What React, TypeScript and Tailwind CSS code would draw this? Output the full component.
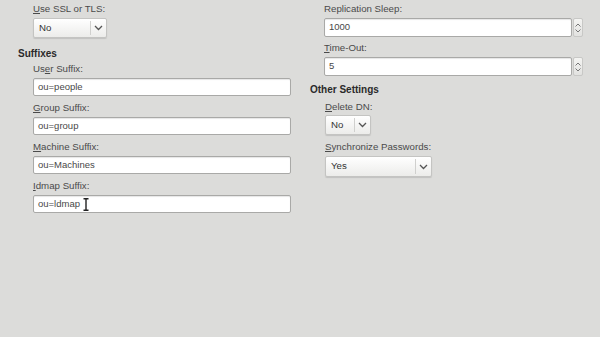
import React from "react";

const font = { fontFamily: '"Liberation Sans", Arial, sans-serif' };

function Label({ pre = "", u, post }: { pre?: string; u: string; post: string }) {
  return (
    <div className="h-[12px] leading-[12px] text-[9.7px] text-[#4a4a4a] whitespace-nowrap">
      {pre}
      <span className="underline underline-offset-1">{u}</span>
      {post}
    </div>
  );
}

function Chevron() {
  return (
    <svg width="9" height="6" viewBox="0 0 9 6" className="block">
      <path d="M1 1 L4.5 4.5 L8 1" fill="none" stroke="#555" strokeWidth="1.3" />
    </svg>
  );
}

function Select({ value, w, h, divider }: { value: string; w: string; h: string; divider: string }) {
  return (
    <div
      className={`${w} ${h} flex items-stretch rounded-[2px] border border-[#c4c4c2] bg-gradient-to-b from-[#ffffff] to-[#ececea] shadow-[0_1px_1px_rgba(0,0,0,0.12)]`}
    >
      <div className={`${divider} flex items-center pl-[5px] text-[9.7px] text-[#333]`}>{value}</div>
      <div className="w-px my-[2px] bg-[#d0d0ce]" />
      <div className="flex-1 flex items-center justify-center">
        <Chevron />
      </div>
    </div>
  );
}

function TextInput({ value, h = "h-[18px]", children }: { value: string; h?: string; children?: React.ReactNode }) {
  return (
    <div
      className={`w-[258px] ${h} flex items-center rounded-[2px] border border-[#a9a9a7] bg-white pl-[4px] text-[9.5px] text-[#484848] shadow-[inset_0_1px_1px_rgba(0,0,0,0.1)]`}
    >
      {value}
      {children}
    </div>
  );
}

function SpinInput({ value }: { value: string }) {
  return (
    <div className="flex h-[19px] items-stretch">
      <div className="w-[248px] flex items-center rounded-[2px] border border-[#a9a9a7] bg-white pl-[4px] text-[9.5px] text-[#484848] shadow-[inset_0_1px_1px_rgba(0,0,0,0.1)]">
        {value}
      </div>
      <div className="ml-[1px] w-[10px] flex flex-col items-center justify-center gap-[2px] rounded-[2px] border border-[#c8c8c6] bg-gradient-to-b from-[#f4f4f2] to-[#e2e2e0]">
        <svg width="6" height="4" viewBox="0 0 6 4"><path d="M0.5 3.5 L3 1 L5.5 3.5" fill="none" stroke="#777" strokeWidth="1" /></svg>
        <svg width="6" height="4" viewBox="0 0 6 4"><path d="M0.5 0.5 L3 3 L5.5 0.5" fill="none" stroke="#777" strokeWidth="1" /></svg>
      </div>
    </div>
  );
}

export default function App() {
  return (
    <div className="w-[600px] h-[337px] bg-[#dcdcda] flex overflow-hidden" style={font}>
      {/* left column */}
      <div className="w-[292px] pl-[18px] pt-[3px] flex flex-col">
        <div className="pl-[15px] flex flex-col">
          <Label u="U" post="se SSL or TLS:" />
          <div className="mt-[3px]">
            <Select value="No" w="w-[74px]" h="h-[20px]" divider="w-[56px]" />
          </div>
        </div>
        <div className="mt-[10px] h-[12px] leading-[12px] text-[10px] font-bold text-[#2a2a2a]">Suffixes</div>
        <div className="pl-[15px] flex flex-col mt-[3px]">
          <Label pre="Us" u="e" post="r Suffix:" />
          <div className="mt-[3px]"><TextInput value="ou=people" /></div>
          <div className="mt-[6px]"><Label u="G" post="roup Suffix:" /></div>
          <div className="mt-[3px]"><TextInput value="ou=group" /></div>
          <div className="mt-[6px]"><Label u="M" post="achine Suffix:" /></div>
          <div className="mt-[3px]"><TextInput value="ou=Machines" /></div>
          <div className="mt-[6px]"><Label u="I" post="dmap Suffix:" /></div>
          <div className="mt-[3px]">
            <TextInput value="ou=ldmap">
              <svg width="6" height="13" viewBox="0 0 6 13" className="ml-[3px]">
                <path d="M0.5 0.8 H5.5 M0.5 12.2 H5.5 M3 0.8 V12.2" stroke="#222" strokeWidth="1.4" fill="none" />
              </svg>
            </TextInput>
          </div>
        </div>
      </div>
      {/* right column */}
      <div className="pl-[18px] pt-[3px] flex flex-col">
        <div className="pl-[14px] flex flex-col">
          <div className="h-[12px] leading-[12px] text-[9.7px] text-[#4a4a4a]">Replication Sleep:</div>
          <div className="mt-[3px]"><SpinInput value="1000" /></div>
          <div className="mt-[5px]"><Label u="T" post="ime-Out:" /></div>
          <div className="mt-[3px]"><SpinInput value="5" /></div>
        </div>
        <div className="mt-[8px] h-[12px] leading-[12px] text-[10px] font-bold text-[#2a2a2a]">Other Settings</div>
        <div className="pl-[15px] flex flex-col">
          <div className="mt-[5px]"><Label u="D" post="elete DN:" /></div>
          <div className="mt-[2px]">
            <Select value="No" w="w-[46px]" h="h-[20px]" divider="w-[28px]" />
          </div>
          <div className="mt-[6px]"><Label u="S" post="ynchronize Passwords:" /></div>
          <div className="mt-[3px]">
            <Select value="Yes" w="w-[107px]" h="h-[21px]" divider="w-[89px]" />
          </div>
        </div>
      </div>
    </div>
  );
}
